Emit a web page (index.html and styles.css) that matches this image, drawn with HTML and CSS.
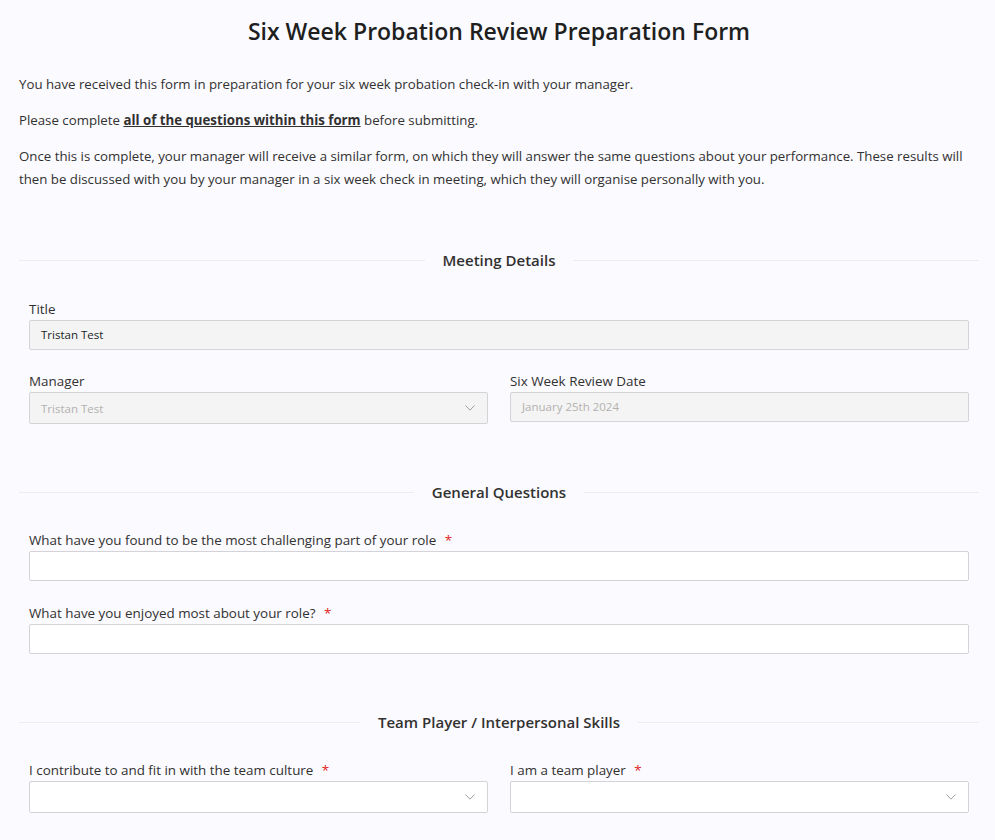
FILE: index.html
```html
<!DOCTYPE html>
<html>
<head>
<meta charset="utf-8">
<link rel="stylesheet" href="styles.css">
</head>
<body>
<div class="page">
  <h1 class="title">Six Week Probation Review Preparation Form</h1>
  <div class="intro">
    <p>You have received this form in preparation for your six week probation check-in with your manager.</p>
    <p>Please complete <b class="ul">all of the questions within this form</b> before submitting.</p>
    <p>Once this is complete, your manager will receive a similar form, on which they will answer the same questions about your performance. These results will then be discussed with you by your manager in a six week check in meeting, which they will organise personally with you.</p>
  </div>

  <section class="section first">
    <div class="divider"><span>Meeting Details</span></div>
    <div class="fields tight">
      <div class="field">
        <label class="label">Title</label>
        <div class="input disabled dark">Tristan Test</div>
      </div>
      <div class="row">
        <div class="field">
          <label class="label">Manager</label>
          <div class="select disabled"><span>Tristan Test</span><svg class="chev" width="10" height="6" viewBox="0 0 10 6"><path d="M0.5 0.5 L5 5.2 L9.5 0.5" fill="none" stroke="#a19f9d" stroke-width="1"/></svg></div>
        </div>
        <div class="field">
          <label class="label">Six Week Review Date</label>
          <div class="input disabled">January 25th 2024</div>
        </div>
      </div>
    </div>
  </section>

  <section class="section">
    <div class="divider"><span>General Questions</span></div>
    <div class="fields">
      <div class="field">
        <label class="label">What have you found to be the most challenging part of your role <span class="req">*</span></label>
        <div class="input"></div>
      </div>
      <div class="field">
        <label class="label">What have you enjoyed most about your role? <span class="req">*</span></label>
        <div class="input"></div>
      </div>
    </div>
  </section>

  <section class="section">
    <div class="divider"><span>Team Player / Interpersonal Skills</span></div>
    <div class="fields">
      <div class="row">
        <div class="field">
          <label class="label">I contribute to and fit in with the team culture <span class="req">*</span></label>
          <div class="select"><span></span><svg class="chev" width="10" height="6" viewBox="0 0 10 6"><path d="M0.5 0.5 L5 5.2 L9.5 0.5" fill="none" stroke="#a19f9d" stroke-width="1"/></svg></div>
        </div>
        <div class="field">
          <label class="label">I am a team player <span class="req">*</span></label>
          <div class="select"><span></span><svg class="chev" width="10" height="6" viewBox="0 0 10 6"><path d="M0.5 0.5 L5 5.2 L9.5 0.5" fill="none" stroke="#a19f9d" stroke-width="1"/></svg></div>
        </div>
      </div>
    </div>
  </section>
</div>
</body>
</html>
```
FILE: styles.css
```css
html, body {
  margin: 0;
  padding: 0;
  background: #fafaff;
}
body {
  font-family: "Open Sans", "Noto Sans", sans-serif;
  color: #323130;
  font-size: 13.25px;
}
.page {
  width: 960px;
  margin-left: 19px;
}
.title {
  margin: 0;
  padding-top: 16px;
  font-size: 23px;
  line-height: 30px;
  font-weight: 600;
  text-align: center;
  color: #201f1e;
}
.intro {
  padding-top: 27px;
}
.intro p {
  margin: 0 0 13px 0;
  line-height: 23px;
}
.ul {
  text-decoration: underline;
  font-weight: 700;
}
.section {
  padding-top: 58px;
}
.section.first {
  padding-top: 46px;
}
.divider {
  display: flex;
  align-items: center;
  gap: 18px;
  height: 20px;
}
.divider::before, .divider::after {
  content: "";
  flex: 1;
  height: 1px;
  background: #ececf2;
}
.divider span {
  font-size: 15px;
  font-weight: 600;
  color: #323130;
  line-height: 20px;
}
.fields {
  padding: 28px 10px 0 10px;
  display: flex;
  flex-direction: column;
  gap: 22px;
}
.fields.tight {
  padding-top: 29px;
  gap: 21px;
}
.row {
  display: grid;
  grid-template-columns: 1fr 1fr;
  gap: 22px;
}
.label {
  display: block;
  line-height: 20px;
  margin-bottom: 1px;
  font-size: 13.4px;
}
.req {
  color: #e0251a;
  margin-left: 5px;
}
.input {
  box-sizing: border-box;
  height: 30px;
  border: 1px solid #d4d4d8;
  border-radius: 2px;
  background: #fff;
  padding: 0 11px;
  line-height: 28px;
  font-size: 11.5px;
}
.select {
  box-sizing: border-box;
  height: 32px;
  border: 1px solid #d4d4d8;
  border-radius: 2px;
  background: #fff;
  padding: 0 12px 0 11px;
  display: flex;
  align-items: center;
  justify-content: space-between;
  font-size: 11.5px;
}
.disabled {
  background: #f4f4f4;
  color: #b3b1af;
}
.disabled.dark {
  color: #201f1e;
}
.chev {
  display: block;
}
```
